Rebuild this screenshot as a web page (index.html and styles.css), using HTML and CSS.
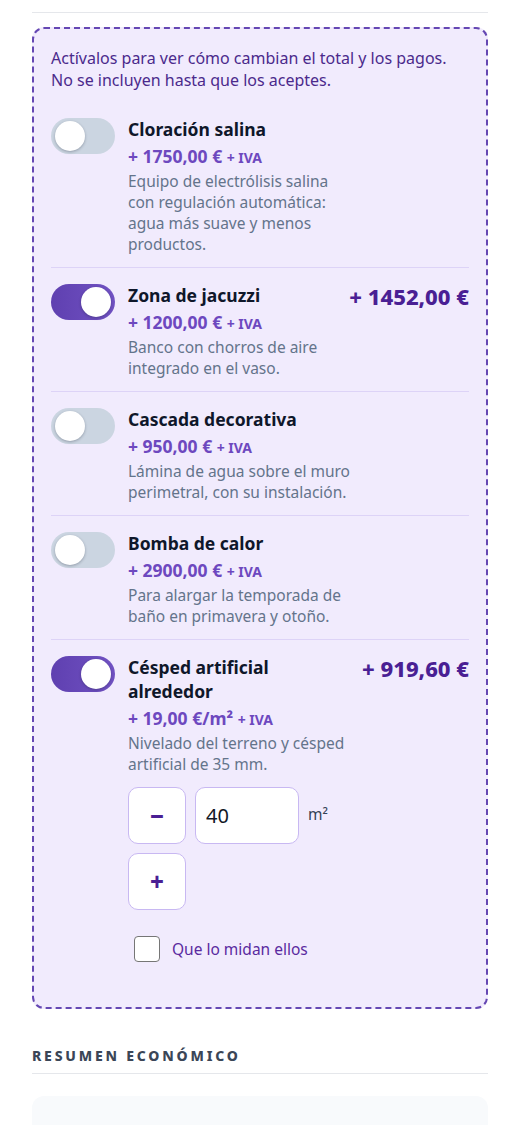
FILE: index.html
```html
<!DOCTYPE html>
<html lang="es">
<head>
    <meta charset="UTF-8">
    <meta name="viewport" content="width=device-width, initial-scale=1.0">
    <title>Extras opcionales</title>
    <link rel="stylesheet" href="styles.css">
</head>
<body>
    <div class="page">
        <div class="top-rule"></div>

        <div class="extras">
            <p class="extras-intro">Actívalos para ver cómo cambian el total y los pagos.<br>No se incluyen hasta que los aceptes.</p>

            <div class="extra">
                <span class="toggle"></span>
                <div class="extra-body">
                    <div class="extra-title">Cloración salina</div>
                    <div class="extra-price">+ 1750,00 € <small>+ IVA</small></div>
                    <p class="extra-desc">Equipo de electrólisis salina con regulación automática: agua más suave y menos productos.</p>
                </div>
                <div class="extra-total"></div>
            </div>

            <div class="extra">
                <span class="toggle on"></span>
                <div class="extra-body">
                    <div class="extra-title">Zona de jacuzzi</div>
                    <div class="extra-price">+ 1200,00 € <small>+ IVA</small></div>
                    <p class="extra-desc">Banco con chorros de aire integrado en el vaso.</p>
                </div>
                <div class="extra-total">+ 1452,00 €</div>
            </div>

            <div class="extra">
                <span class="toggle"></span>
                <div class="extra-body">
                    <div class="extra-title">Cascada decorativa</div>
                    <div class="extra-price">+ 950,00 € <small>+ IVA</small></div>
                    <p class="extra-desc">Lámina de agua sobre el muro perimetral, con su instalación.</p>
                </div>
                <div class="extra-total"></div>
            </div>

            <div class="extra">
                <span class="toggle"></span>
                <div class="extra-body">
                    <div class="extra-title">Bomba de calor</div>
                    <div class="extra-price">+ 2900,00 € <small>+ IVA</small></div>
                    <p class="extra-desc">Para alargar la temporada de baño en primavera y otoño.</p>
                </div>
                <div class="extra-total"></div>
            </div>

            <div class="extra last">
                <span class="toggle on"></span>
                <div class="extra-body">
                    <div class="extra-title">Césped artificial alrededor</div>
                    <div class="extra-price">+ 19,00 €/m² <small>+ IVA</small></div>
                    <p class="extra-desc">Nivelado del terreno y césped artificial de 35 mm.</p>

                    <div class="qty">
                        <button class="qty-btn">&minus;</button>
                        <input class="qty-input" type="text" value="40">
                        <span class="qty-unit">m²</span>
                        <button class="qty-btn">+</button>
                    </div>

                    <label class="measure">
                        <span class="checkbox"></span>
                        Que lo midan ellos
                    </label>
                </div>
                <div class="extra-total">+ 919,60 €</div>
            </div>
        </div>

        <h2 class="section-title">Resumen económico</h2>
        <div class="summary"></div>
    </div>
</body>
</html>
```

FILE: styles.css
```css
body {
    margin: 0;
    font-family: "Noto Sans", "Open Sans", sans-serif;
    background: #fff;
    color: #0f172a;
}
.page {
    padding: 12px 32px 0;
}
.top-rule {
    height: 1px;
    background: #e5e7eb;
    margin-bottom: 14px;
}
.extras {
    border: 2px dashed #6547b3;
    border-radius: 12px;
    background: #f1ebfd;
    padding: 18px 17px 33px;
}
.extras-intro {
    margin: 0 0 11px;
    font-size: 16px;
    line-height: 22px;
    color: #4b2a8c;
}
.extra {
    display: grid;
    grid-template-columns: 64px 1fr auto;
    column-gap: 13px;
    padding: 15px 0 12px;
    border-bottom: 1px solid #ddd3f7;
}
.extra.last {
    border-bottom: none;
}
.toggle {
    position: relative;
    display: block;
    width: 64px;
    height: 36px;
    margin-top: 1px;
    border-radius: 18px;
    background: #cbd5e1;
}
.toggle::after {
    content: "";
    position: absolute;
    top: 3px;
    left: 4px;
    width: 30px;
    height: 30px;
    border-radius: 50%;
    background: #fff;
    box-shadow: 0 1px 3px rgba(15, 23, 42, 0.3);
}
.toggle.on {
    background: linear-gradient(90deg, #5f40b0, #7152c3);
}
.toggle.on::after {
    left: 30px;
}
.extra-title {
    font-size: 17.5px;
    line-height: 24px;
    font-weight: 700;
    color: #0f172a;
}
.extra-price {
    margin-top: 3px;
    font-size: 17.5px;
    line-height: 24px;
    font-weight: 700;
    color: #6d48bf;
}
.extra-price small {
    font-size: 14px;
    line-height: 1;
}
.extra-desc {
    max-width: 226px;
    margin: 3px 0 0;
    font-size: 15.5px;
    line-height: 21px;
    color: #64748b;
}
.extra-total {
    text-align: right;
    font-size: 22px;
    line-height: 26px;
    font-weight: 800;
    color: #4a1f94;
    white-space: nowrap;
}
.qty {
    display: flex;
    flex-wrap: wrap;
    align-items: center;
    gap: 9px;
    max-width: 226px;
    margin-top: 12px;
}
.qty-btn {
    width: 58px;
    height: 57px;
    border: 1px solid #c8b8f2;
    border-radius: 10px;
    background: #fff;
    font-family: inherit;
    font-size: 24px;
    font-weight: 800;
    color: #4a1f94;
    cursor: pointer;
}
.qty-input {
    box-sizing: border-box;
    width: 104px;
    height: 57px;
    padding: 0 10px;
    border: 1px solid #c8b8f2;
    border-radius: 10px;
    background: #fff;
    font-family: inherit;
    font-size: 20px;
    color: #111827;
}
.qty-unit {
    font-size: 15.5px;
    color: #334155;
    margin-top: -4px;
}
.measure {
    display: flex;
    align-items: center;
    gap: 12px;
    margin: 26px 0 0 6px;
    font-size: 15.5px;
    color: #5a2aa0;
}
.checkbox {
    box-sizing: border-box;
    width: 26px;
    height: 26px;
    border: 1.5px solid #767676;
    border-radius: 4px;
    background: #fff;
}
.section-title {
    margin: 37px 0 0;
    padding-bottom: 7px;
    border-bottom: 1px solid #e5e7eb;
    font-size: 14px;
    line-height: 20px;
    font-weight: 800;
    letter-spacing: 2.8px;
    text-transform: uppercase;
    color: #3b4657;
}
.summary {
    margin-top: 22px;
    height: 60px;
    border-radius: 12px;
    background: #f8fafc;
}
```
